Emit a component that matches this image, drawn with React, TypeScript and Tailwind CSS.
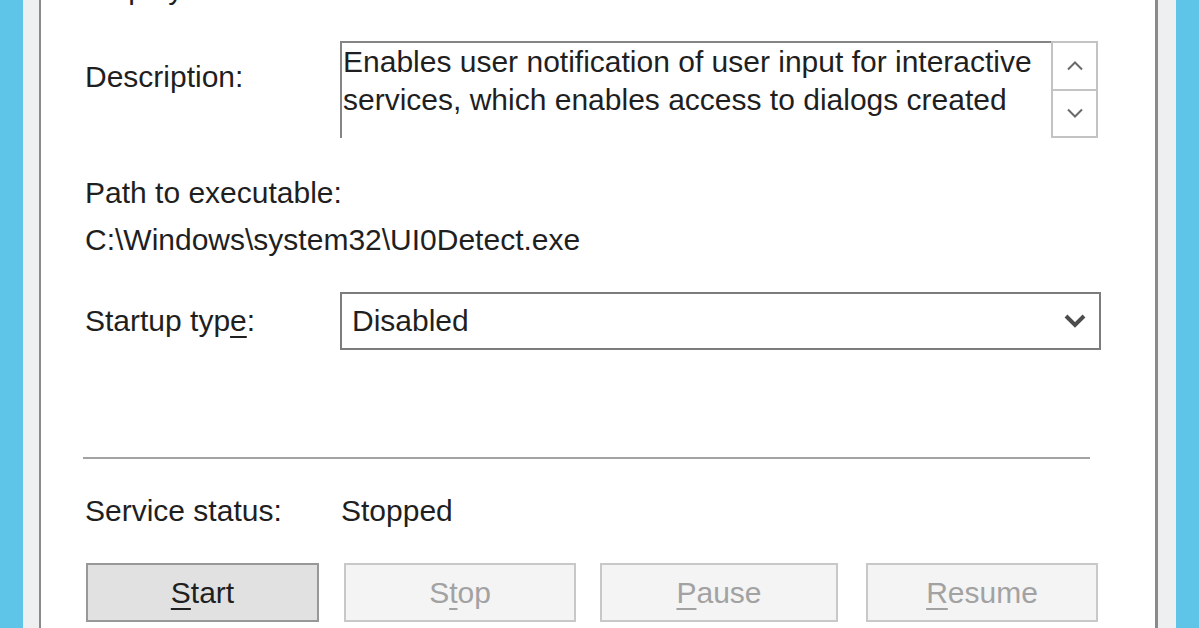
import React from "react";

function Mn({ children }: { children: React.ReactNode }) {
  return <span className="underline decoration-[2px] underline-offset-[5px]">{children}</span>;
}

function Chevron({ up, className }: { up?: boolean; className?: string }) {
  return (
    <svg width="18" height="11" viewBox="0 0 18 11" className={className}>
      <path
        d={up ? "M2 9.5 L9 2.5 L16 9.5" : "M2 1.5 L9 8.5 L16 1.5"}
        fill="none"
        stroke="#6a6a6a"
        strokeWidth="2"
      />
    </svg>
  );
}

export default function App() {
  return (
    <div className="flex h-[628px] w-[1199px] overflow-hidden bg-white font-['Liberation_Sans',Arial,sans-serif] text-[30px] text-[#1f1f1f]">
      {/* left frame */}
      <div className="w-[23px] shrink-0 bg-[#5ec4e8]" />
      <div className="w-[16px] shrink-0 bg-[#eeeff0]" />
      <div className="w-[2px] shrink-0 bg-[#8a8a8a]" />

      <main className="flex min-w-0 flex-1 flex-col bg-white pl-[44px] pr-[54px]">
        {/* cut-off first row */}
        <div className="mt-[-30px] flex h-[38px] shrink-0 items-center leading-[38px] whitespace-nowrap">
          <div className="w-[256px]">Display name:</div>
          <div>Interactive Services Detection</div>
        </div>

        {/* Description */}
        <div className="mt-[33px] flex shrink-0 items-start">
          <div className="w-[255px] shrink-0 pt-[17px] leading-[38px]">Description:</div>
          <div className="mr-[3px] flex h-[97px] flex-1">
            <div className="flex-1 overflow-hidden border-l-2 border-t-2 border-[#858585] pl-[1px] leading-[38px] whitespace-nowrap">
              <div>Enables user notification of user input for interactive</div>
              <div>services, which enables access to dialogs created</div>
            </div>
            <div className="flex w-[47px] shrink-0 flex-col border-2 border-[#c3c3c3] bg-white">
              <div className="flex flex-1 items-center justify-center border-b-2 border-[#c3c3c3]">
                <Chevron up />
              </div>
              <div className="flex flex-1 items-center justify-center">
                <Chevron />
              </div>
            </div>
          </div>
        </div>

        {/* Path */}
        <div className="mt-[36px] shrink-0 leading-[38px] whitespace-nowrap">Path to executable:</div>
        <div className="mt-[9px] shrink-0 leading-[38px] whitespace-nowrap">C:\Windows\system32\UI0Detect.exe</div>

        {/* Startup type */}
        <div className="mt-[33px] flex shrink-0 items-center">
          <div className="w-[255px] shrink-0 leading-[38px]">
            Startup typ<Mn>e</Mn>:
          </div>
          <div className="flex h-[58px] flex-1 items-center justify-between border-2 border-[#7c7c7c] bg-white pl-[10px] pr-[12px]">
            <span className="leading-[38px]">Disabled</span>
            <svg width="24" height="16" viewBox="0 0 24 16">
              <path d="M3 3 L12 12 L21 3" fill="none" stroke="#4d4d4d" strokeWidth="4" />
            </svg>
          </div>
        </div>

        {/* separator */}
        <div className="ml-[-2px] mr-[11px] mt-[107px] h-[2px] shrink-0 bg-[#a3a3a3]" />

        {/* Service status */}
        <div className="mt-[33px] flex shrink-0 leading-[38px] whitespace-nowrap">
          <div className="w-[256px] shrink-0">Service status:</div>
          <div>Stopped</div>
        </div>

        {/* Buttons */}
        <div className="mt-[33px] flex shrink-0 items-start leading-[38px]">
          <button className="ml-[1px] flex h-[59px] w-[233px] items-center justify-center border-2 border-[#989898] bg-[#e1e1e1] text-[#1f1f1f]">
            <span>
              <Mn>S</Mn>tart
            </span>
          </button>
          <button className="ml-[25px] flex h-[59px] w-[232px] items-center justify-center border-2 border-[#c8c8c8] bg-[#f4f4f4] text-[#a2a2a2]">
            <span>
              S<Mn>t</Mn>op
            </span>
          </button>
          <button className="ml-[24px] flex h-[59px] w-[238px] items-center justify-center border-2 border-[#c8c8c8] bg-[#f4f4f4] text-[#a2a2a2]">
            <span>
              <Mn>P</Mn>ause
            </span>
          </button>
          <button className="ml-[28px] flex h-[59px] w-[232px] items-center justify-center border-2 border-[#c8c8c8] bg-[#f4f4f4] text-[#a2a2a2]">
            <span>
              <Mn>R</Mn>esume
            </span>
          </button>
        </div>
      </main>

      {/* right frame */}
      <div className="w-[3px] shrink-0 bg-[#8a8a8a]" />
      <div className="w-[18px] shrink-0 bg-[#eeeff0]" />
      <div className="w-[23px] shrink-0 bg-[#5ec4e8]" />
    </div>
  );
}
